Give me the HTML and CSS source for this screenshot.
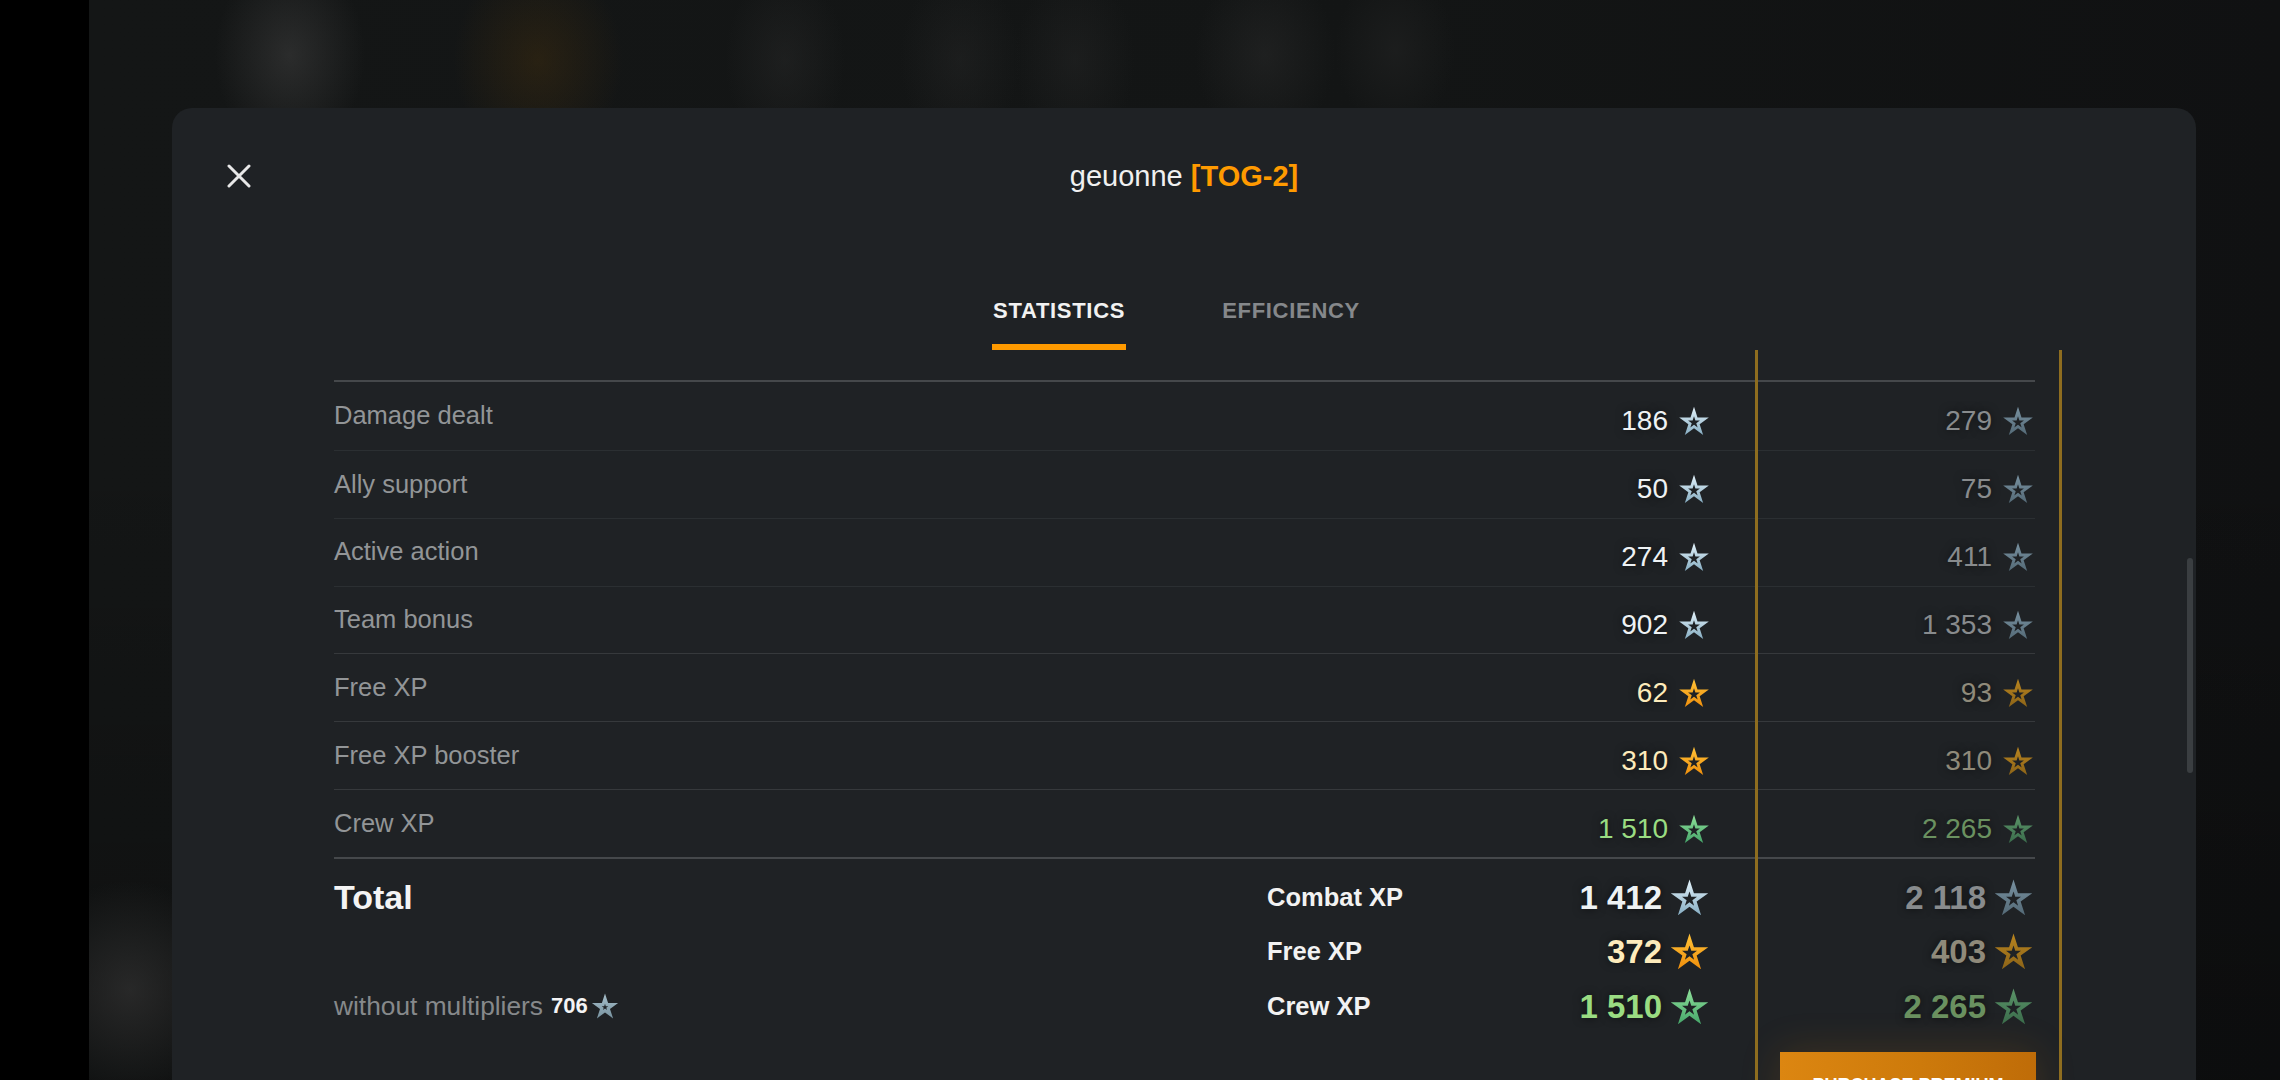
FILE: index.html
```html
<!DOCTYPE html>
<html lang="en">
<head>
<meta charset="utf-8">
<title>Battle results</title>
<link rel="stylesheet" href="styles.css">
</head>
<body>
<svg class="defs" width="0" height="0" aria-hidden="true">
  <defs>
    <linearGradient id="g-blue" x1="0" y1="0" x2="0" y2="1">
      <stop offset="0" stop-color="#e4f3fb"/>
      <stop offset="1" stop-color="#86adc2"/>
    </linearGradient>
    <linearGradient id="g-blue-dim" x1="0" y1="0" x2="0" y2="1">
      <stop offset="0" stop-color="#7891a0"/>
      <stop offset="1" stop-color="#546a77"/>
    </linearGradient>
    <linearGradient id="g-gold" x1="0" y1="0" x2="0" y2="1">
      <stop offset="0" stop-color="#ffc238"/>
      <stop offset="1" stop-color="#ef8f0c"/>
    </linearGradient>
    <linearGradient id="g-gold-dim" x1="0" y1="0" x2="0" y2="1">
      <stop offset="0" stop-color="#b8841f"/>
      <stop offset="1" stop-color="#8c6418"/>
    </linearGradient>
    <linearGradient id="g-green" x1="0" y1="0" x2="0" y2="1">
      <stop offset="0" stop-color="#8fe09a"/>
      <stop offset="1" stop-color="#46a66a"/>
    </linearGradient>
    <linearGradient id="g-green-dim" x1="0" y1="0" x2="0" y2="1">
      <stop offset="0" stop-color="#5b9468"/>
      <stop offset="1" stop-color="#3a6c4c"/>
    </linearGradient>
    <linearGradient id="g-small" x1="0" y1="0" x2="0" y2="1">
      <stop offset="0" stop-color="#a7bfca"/>
      <stop offset="1" stop-color="#7893a0"/>
    </linearGradient>
    <symbol id="star" viewBox="0 0 24 24">
      <path fill-rule="evenodd" d="M12 2 L14.47 9.6 L22.46 9.6 L15.99 14.3 L18.47 21.9 L12 17.2 L5.53 21.9 L8.01 14.3 L1.54 9.6 L9.53 9.6 Z M12 8.6 L11.01 11.64 L7.82 11.64 L10.4 13.52 L9.41 16.56 L12 14.68 L14.59 16.56 L13.6 13.52 L16.18 11.64 L12.99 11.64 Z"/>
    </symbol>
    <symbol id="star-thick" viewBox="0 0 24 24">
      <path fill-rule="evenodd" d="M12 2 L14.47 9.6 L22.46 9.6 L15.99 14.3 L18.47 21.9 L12 17.2 L5.53 21.9 L8.01 14.3 L1.54 9.6 L9.53 9.6 Z M12 10.25 L11.38 12.15 L9.38 12.15 L11 13.32 L10.38 15.22 L12 14.05 L13.62 15.22 L13 13.32 L14.62 12.15 L12.62 12.15 Z"/>
    </symbol>
  </defs>
</svg>
<div class="screen">
  <div class="edge"></div>
  <div class="backdrop">
    <section class="modal">
      <header class="modal-head">
        <button class="close" aria-label="Close">
          <svg viewBox="0 0 24 24" width="24" height="24"><path d="M2 2 L22 22 M22 2 L2 22" stroke="currentColor" stroke-width="3" stroke-linecap="round" fill="none"/></svg>
        </button>
        <h1 class="title">geuonne <b>[TOG-2]</b></h1>
        <span></span>
      </header>
      <nav class="tabs">
        <span class="tab active">STATISTICS</span>
        <span class="tab">EFFICIENCY</span>
      </nav>
      <div class="scroll">
        <div class="premium-frame"></div>
        <div class="table">
          <div class="row">
            <span class="label">Damage dealt</span>
            <span class="val c-white"><span>186</span><svg class="star s-blue"><use href="#star"/></svg></span>
            <span class="val prem c-gray"><span>279</span><svg class="star s-blue-dim"><use href="#star"/></svg></span>
          </div>
          <div class="row">
            <span class="label">Ally support</span>
            <span class="val c-white"><span>50</span><svg class="star s-blue"><use href="#star"/></svg></span>
            <span class="val prem c-gray"><span>75</span><svg class="star s-blue-dim"><use href="#star"/></svg></span>
          </div>
          <div class="row">
            <span class="label">Active action</span>
            <span class="val c-white"><span>274</span><svg class="star s-blue"><use href="#star"/></svg></span>
            <span class="val prem c-gray"><span>411</span><svg class="star s-blue-dim"><use href="#star"/></svg></span>
          </div>
          <div class="row">
            <span class="label">Team bonus</span>
            <span class="val c-white"><span>902</span><svg class="star s-blue"><use href="#star"/></svg></span>
            <span class="val prem c-gray"><span>1 353</span><svg class="star s-blue-dim"><use href="#star"/></svg></span>
          </div>
          <div class="row lite">
            <span class="label">Free XP</span>
            <span class="val c-cream"><span>62</span><svg class="star s-gold"><use href="#star"/></svg></span>
            <span class="val prem c-tan"><span>93</span><svg class="star s-gold-dim"><use href="#star"/></svg></span>
          </div>
          <div class="row lite">
            <span class="label">Free XP booster</span>
            <span class="val c-cream"><span>310</span><svg class="star s-gold"><use href="#star"/></svg></span>
            <span class="val prem c-tan"><span>310</span><svg class="star s-gold-dim"><use href="#star"/></svg></span>
          </div>
          <div class="row lite">
            <span class="label">Crew XP</span>
            <span class="val c-green"><span>1 510</span><svg class="star s-green"><use href="#star"/></svg></span>
            <span class="val prem c-green-dim"><span>2 265</span><svg class="star s-green-dim"><use href="#star"/></svg></span>
          </div>
        </div>
        <div class="total">
          <span class="total-title">Total</span>
          <span class="tcell">
            <span class="tlabel">Combat XP</span>
            <span class="tval c-white"><span>1 412</span><svg class="star big s-blue"><use href="#star"/></svg></span>
          </span>
          <span class="tval tprem c-gray"><span>2 118</span><svg class="star big s-blue-dim"><use href="#star"/></svg></span>

          <span></span>
          <span class="tcell">
            <span class="tlabel">Free XP</span>
            <span class="tval c-cream"><span>372</span><svg class="star big s-gold"><use href="#star"/></svg></span>
          </span>
          <span class="tval tprem c-tan"><span>403</span><svg class="star big s-gold-dim"><use href="#star"/></svg></span>

          <span class="nomult">without multipliers <b>706</b><svg class="star small s-small"><use href="#star-thick"/></svg></span>
          <span class="tcell">
            <span class="tlabel">Crew XP</span>
            <span class="tval c-green"><span>1 510</span><svg class="star big s-green"><use href="#star"/></svg></span>
          </span>
          <span class="tval tprem c-green-dim"><span>2 265</span><svg class="star big s-green-dim"><use href="#star"/></svg></span>
        </div>
        <div class="actions">
          <button class="buy">PURCHASE PREMIUM</button>
        </div>
      </div>
      <div class="scrollbar"></div>
    </section>
  </div>
</div>
</body>
</html>
```
FILE: styles.css
```css
* { box-sizing: border-box; }
html, body { margin: 0; padding: 0; }
body {
  width: 2280px;
  height: 1080px;
  overflow: hidden;
  background: #000;
  font-family: "Liberation Sans", Arial, sans-serif;
}
.defs { position: absolute; width: 0; height: 0; overflow: hidden; }

.screen { display: flex; height: 1080px; }
.edge { width: 89px; flex: none; background: #000; }
.backdrop {
  flex: 1;
  height: 1080px;
  overflow: hidden;
  padding: 108px 84px 0 83px;
  background:
    radial-gradient(75px 100px at 201px 55px, rgba(66,66,66,.5), rgba(66,66,66,0)),
    radial-gradient(85px 100px at 449px 60px, rgba(72,50,14,.4), rgba(72,50,14,0)),
    radial-gradient(60px 90px at 696px 60px, rgba(48,48,48,.35), rgba(48,48,48,0)),
    radial-gradient(60px 90px at 871px 60px, rgba(48,48,48,.3), rgba(48,48,48,0)),
    radial-gradient(60px 90px at 986px 60px, rgba(48,48,48,.3), rgba(48,48,48,0)),
    radial-gradient(70px 90px at 1176px 55px, rgba(52,52,52,.35), rgba(52,52,52,0)),
    radial-gradient(60px 80px at 1306px 50px, rgba(48,48,48,.3), rgba(48,48,48,0)),
    radial-gradient(100px 110px at 41px 990px, rgba(50,50,50,.7), rgba(50,50,50,0)),
    linear-gradient(180deg, rgba(0,0,0,0) 40%, rgba(0,0,0,.25) 100%),
    linear-gradient(90deg, #141616 0%, #131515 60%, #101112 100%);
}

.modal {
  position: relative;
  height: 1100px;
  background: #1f2225;
  border-radius: 20px 20px 0 0;
  display: flex;
  flex-direction: column;
}

.modal-head {
  height: 136px;
  flex: none;
  display: grid;
  grid-template-columns: 1fr auto 1fr;
  align-items: center;
}
.close {
  justify-self: start;
  margin-left: 55px;
  width: 24px;
  height: 24px;
  padding: 0;
  border: 0;
  background: none;
  color: #e8e8e8;
  display: block;
}
.close svg { display: block; }
.title {
  margin: 0;
  font-size: 29px;
  line-height: 29px;
  font-weight: 400;
  color: #f0f0f0;
  white-space: nowrap;
}
.title b { color: #ff9a00; font-weight: 700; }

.tabs {
  flex: none;
  display: flex;
  justify-content: center;
  gap: 95px;
  padding: 56px 15px 0 0;
}
.tab {
  font-size: 22px;
  line-height: 22px;
  font-weight: 700;
  letter-spacing: 0.7px;
  color: #85888b;
  padding: 0 1px 22px 1px;
  border-bottom: 6px solid transparent;
}
.tab.active { color: #f2f2f2; border-bottom-color: #ff9a00; }

.scroll {
  position: relative;
  flex: 1;
  overflow: hidden;
  padding: 30px 161px 0 162px;
}
.premium-frame {
  position: absolute;
  top: 0;
  bottom: 0;
  left: 1583px;
  width: 307px;
  border-left: 3px solid #8e6d1f;
  border-right: 3px solid #8e6d1f;
  pointer-events: none;
  z-index: 2;
}

.table { border-top: 2px solid #45484b; }
.row {
  height: 67.86px;
  display: grid;
  grid-template-columns: 1fr auto 324px;
  align-items: center;
}
.row + .row { border-top: 1.5px solid #2b2f32; }
.row.lite { border-top-color: #36393c; }

.label {
  font-size: 25.5px;
  line-height: 1;
  color: #929597;
}
.val {
  display: flex;
  align-items: center;
  justify-content: flex-end;
  gap: 9px;
  font-size: 28px;
  line-height: 28px;
  padding-top: 10px;
  text-shadow: 0 0 8px rgba(0,0,0,.6);
}
.val.prem { padding-right: 0; }

.star {
  width: 34px;
  height: 34px;
  flex: none;
}
.star.big { width: 43px; height: 43px; }
.star.small { width: 30px; height: 30px; }

.s-blue { fill: url(#g-blue); }
.s-blue-dim { fill: url(#g-blue-dim); }
.s-gold { fill: url(#g-gold); }
.s-gold-dim { fill: url(#g-gold-dim); }
.s-green { fill: url(#g-green); }
.s-green-dim { fill: url(#g-green-dim); }
.s-small { fill: url(#g-small); }

.c-white { color: #eef2f4; }
.c-gray { color: #888b8d; }
.c-cream { color: #fdebbb; }
.c-tan { color: #8f8a7a; }
.c-green { color: #9adc82; }
.c-green-dim { color: #6a9160; }

.total {
  border-top: 2px solid #45484b;
  display: grid;
  grid-template-columns: 933px 1fr 324px;
  grid-auto-rows: 54.5px;
  align-items: center;
  padding-top: 11px;
}
.total-title {
  font-size: 34px;
  line-height: 1;
  font-weight: 700;
  color: #f4f4f4;
}
.tcell {
  display: flex;
  justify-content: space-between;
  align-items: center;
}
.tlabel {
  font-size: 25.5px;
  line-height: 1;
  font-weight: 700;
  color: #f2f2f2;
}
.tval {
  display: flex;
  align-items: center;
  gap: 6px;
  font-size: 33px;
  line-height: 33px;
  font-weight: 700;
  text-shadow: 0 0 8px rgba(0,0,0,.6);
}
.tprem { justify-content: flex-end; padding-right: 0; }

.nomult {
  display: flex;
  align-items: center;
  font-size: 26.3px;
  line-height: 1;
  color: #86898b;
}
.nomult b {
  font-size: 22px;
  color: #f4f4f4;
  margin: 0 2px 0 8px;
}

.actions {
  display: flex;
  justify-content: flex-end;
  padding-top: 18px;
  margin-right: -1px;
}
.buy {
  width: 256px;
  padding: 24px 0 40px;
  border: 0;
  background: linear-gradient(90deg, #dc8611 0%, #cd7a0b 55%, #bf6c08 100%);
  color: #fff;
  font-family: "Liberation Sans", Arial, sans-serif;
  font-size: 18px;
  line-height: 18px;
  font-weight: 700;
  box-shadow: 0 0 40px rgba(214, 128, 16, .18);
}

.scrollbar {
  position: absolute;
  right: 3px;
  top: 450px;
  width: 6px;
  height: 215px;
  border-radius: 3px;
  background: #3a3e41;
}
```
